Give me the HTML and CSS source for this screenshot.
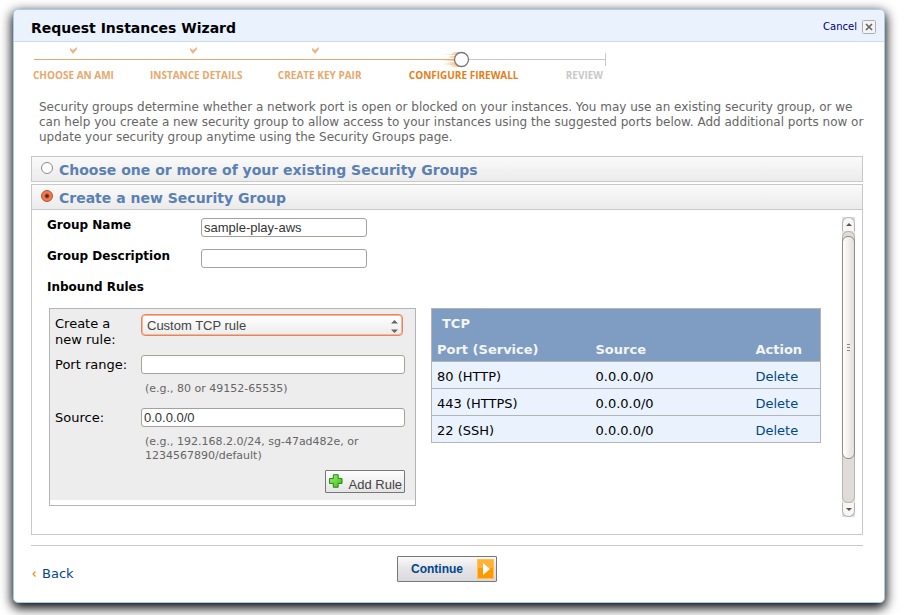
FILE: index.html
```html
<!DOCTYPE html>
<html lang="en">
<head>
<meta charset="utf-8">
<title>Request Instances Wizard</title>
<link rel="stylesheet" href="styles.css">
</head>
<body>
<main class="dialog">
  <header class="titlebar">
    <h1>Request Instances Wizard</h1>
    <button type="button" class="cancel">
      <span>Cancel</span>
      <svg width="14" height="14" viewBox="0 0 14 14" aria-hidden="true">
        <rect x=".5" y=".5" width="13" height="13" rx="1" fill="#f4f4f4" stroke="#b0aeac"/>
        <path d="M4 4l6 6M10 4l-6 6" stroke="#666" stroke-width="1.700"/>
      </svg>
    </button>
  </header>

  <nav class="steps" aria-label="Wizard steps">
    <svg class="track" width="573" height="22" viewBox="0 0 573 22" aria-hidden="true">
      <defs>
        <linearGradient id="trail"><stop offset="0" stop-color="#f4a866" stop-opacity="0"/><stop offset="1" stop-color="#f2a057" stop-opacity=".8"/></linearGradient>
      </defs>
      <path d="M1 12.500h420" stroke="#e6a972"/>
      <path d="M436 12.500h136M572.500 6v13" stroke="#c8c8c8"/>
      <g fill="url(#trail)">
        <path d="M417 5h9v2h-9z"/><path d="M411 7h14v1h-14z"/><path d="M414 9h10v2h-10z"/><path d="M409 12h14v2h-14z"/><path d="M413 15h11v1h-11z"/><path d="M410 16h15v2h-15z"/><path d="M416 18h10v2h-10z"/>
      </g>
      <circle cx="428.500" cy="12.500" r="7" fill="#fff" stroke="#777" stroke-width="1.300"/>
      <g fill="#ecb585">
        <path d="M37 1l3 2 4-3v2l-4 5-3-4z"/>
        <path d="M157 1l3 2 4-3v2l-4 5-3-4z"/>
        <path d="M279 1l3 2 4-3v2l-4 5-3-4z"/>
      </g>
    </svg>
    <ol class="labels">
      <li>CHOOSE AN AMI</li>
      <li>INSTANCE DETAILS</li>
      <li>CREATE KEY PAIR</li>
      <li class="current" aria-current="step">CONFIGURE FIREWALL</li>
      <li class="pending">REVIEW</li>
    </ol>
  </nav>

  <p class="intro">Security groups determine whether a network port is open or blocked on your instances. You may use an existing security group, or we can help you create a new security group to allow access to your instances using the suggested ports below. Add additional ports now or update your security group anytime using the Security Groups page.</p>

  <section class="panel">
    <label class="panel-head"><input type="radio" name="group"><span>Choose one or more of your existing Security Groups</span></label>
  </section>

  <section class="panel">
    <label class="panel-head open"><input type="radio" name="group" checked><span>Create a new Security Group</span></label>
    <div class="panel-body">
      <div class="content">
        <div class="field"><label for="gname">Group Name</label><input type="text" id="gname" value="sample-play-aws"></div>
        <div class="field"><label for="gdesc">Group Description</label><input type="text" id="gdesc"></div>
        <h2>Inbound Rules</h2>
        <div class="rules">
          <form class="rule-form">
            <div class="rule-fields">
              <label for="rule">Create a new rule:</label>
              <div class="select-wrap">
                <select id="rule"><option>Custom TCP rule</option></select>
                <svg class="arrows" width="7" height="13" viewBox="0 0 7 13" aria-hidden="true"><path d="M0 3.500L3.500 0 7 3.500zM0 9.500h7L3.500 13z" fill="#666"/></svg>
              </div>
              <label for="port">Port range:</label>
              <div><input type="text" id="port"><p class="hint">(e.g., 80 or 49152-65535)</p></div>
              <label for="source">Source:</label>
              <div><input type="text" id="source" value="0.0.0.0/0"><p class="hint">(e.g., 192.168.2.0/24, sg-47ad482e, or 1234567890/default)</p></div>
            </div>
            <button type="button" class="add">
              <svg width="14" height="14" viewBox="0 0 14 14" aria-hidden="true">
                <defs><linearGradient id="green" x1="0" y1="0" x2="1" y2="1"><stop offset="0" stop-color="#a5ee7a"/><stop offset="1" stop-color="#3fbe10"/></linearGradient></defs>
                <path d="M4.500.500h5v4h4v5h-4v4h-5v-4h-4v-5h4z" fill="url(#green)" stroke="#158a0d"/>
              </svg>
              <span>Add Rule</span>
            </button>
          </form>
          <table class="ports">
            <thead>
              <tr class="proto"><th colspan="3">TCP</th></tr>
              <tr><th class="c1">Port (Service)</th><th class="c2">Source</th><th>Action</th></tr>
            </thead>
            <tbody>
              <tr><td>80 (HTTP)</td><td>0.0.0.0/0</td><td><a href="#">Delete</a></td></tr>
              <tr><td>443 (HTTPS)</td><td>0.0.0.0/0</td><td><a href="#">Delete</a></td></tr>
              <tr><td>22 (SSH)</td><td>0.0.0.0/0</td><td><a href="#">Delete</a></td></tr>
            </tbody>
          </table>
        </div>
      </div>
      <div class="scrollbar" aria-hidden="true">
        <div class="up"><svg width="6" height="3" viewBox="0 0 6 3"><path d="M0 3l3-3 3 3z" fill="#555"/></svg></div>
        <div class="trough"><div class="thumb"><i></i><i></i><i></i></div></div>
        <div class="down"><svg width="6" height="3" viewBox="0 0 6 3"><path d="M0 0h6L3 3z" fill="#555"/></svg></div>
      </div>
    </div>
  </section>

  <footer class="footer">
    <a href="#" class="back"><svg width="4" height="6" viewBox="0 0 4 6" aria-hidden="true"><path d="M3.500.500L1 3l2.500 2.500" fill="none" stroke="#f08a24" stroke-width="1.200"/></svg><span>Back</span></a>
    <button type="button" class="continue">
      <span>Continue</span>
      <svg width="17" height="20" viewBox="0 0 17 20" aria-hidden="true">
        <rect width="17" height="20" fill="#f90"/><rect width="17" height="9" fill="#ffb236"/>
        <rect x=".5" y=".5" width="16" height="19" fill="none" stroke="#ffc04d"/>
        <path d="M6 4v12l7-6z" fill="#fff"/>
      </svg>
    </button>
  </footer>
</main>
</body>
</html>
```
FILE: styles.css
```css
* { box-sizing: border-box; }
body {
  margin: 0;
  padding: 9px 25px 12px 13px;
  background: #fff;
  color: #000;
  font: 13px/16px "DejaVu Sans", sans-serif;
  overflow: hidden;
}
h1, h2, p, ol { margin: 0; padding: 0; }
a { color: #00468c; text-decoration: none; }
button { font: inherit; cursor: pointer; }

.dialog {
  padding-bottom: 20px;
  background: #fff;
  border: 1px solid #a5cbea;
  border-radius: 5px;
  box-shadow: 0 4px 12px 1px #000;
}
.titlebar {
  display: flex;
  align-items: center;
  justify-content: space-between;
  height: 32px;
  padding: 3px 8px 0 17px;
  background: #eaf2fe;
  border-bottom: 1px solid #c9dcea;
  border-radius: 4px 4px 0 0;
}
h1 { padding-top: 2px; font-size: 14px; line-height: 18px; }
.cancel {
  display: flex;
  align-items: center;
  gap: 5px;
  padding: 0;
  border: 0;
  background: none;
  color: #00007d;
  font-size: 10px;
}

.steps { padding: 5px 19px 0; }
.track { display: block; }
.labels {
  display: grid;
  grid-template-columns: 117fr 128fr 131fr 157fr 37fr;
  width: 570px;
  list-style: none;
  color: #e9a76a;
  font: bold 10px/12px "Open Sans", sans-serif;
  white-space: nowrap;
}
.labels .current { color: #e67e17; }
.labels .pending { color: #c8c8c8; }

.intro {
  padding: 19px 16px 11px 25px;
  color: #666;
  font-size: 12px;
  line-height: 15px;
}

.panel { margin: 0 21px 2px 17px; border: 1px solid #c8c8c8; }
.panel-head {
  display: flex;
  align-items: center;
  height: 24px;
  padding: 0 9px;
  gap: 6px;
  background: linear-gradient(#fafafa, #ebebeb);
  color: #5b80b2;
  font-size: 14px;
  font-weight: bold;
}
.panel-head.open { height: 25px; border-bottom: 1px solid #c8c8c8; }
.panel-head span { padding-top: 2px; }
.panel-head input {
  appearance: none;
  width: 12px;
  height: 12px;
  margin: 0 0 3px;
  border: 1px solid #8c8c8c;
  border-radius: 50%;
  background: #fff;
}
.panel-head input:checked {
  border-color: #b4512c;
  background: radial-gradient(circle, #5a2413 0 1px, #f07c50 3px);
}
.panel-body {
  display: flex;
  justify-content: space-between;
  padding: 7px 7px 17px 15px;
}
.field {
  display: grid;
  grid-template-columns: 154px 166px;
  margin-bottom: 11px;
  font-size: 12px;
  font-weight: bold;
}
input[type="text"] {
  width: 100%;
  height: 19px;
  padding: 0 2px;
  border: 1px solid #a5a19d;
  border-radius: 3px;
  background: #fff;
  color: #333;
  font: 13px/16px "Liberation Sans", sans-serif;
}
.field input { margin-top: 1px; }
h2 { font-size: 12px; line-height: 16px; }

.rules { display: flex; align-items: flex-start; gap: 15px; padding: 13px 0 0 2px; }
.rule-form {
  width: 367px;
  border: 1px solid #b4b4b4;
  padding: 5px 10px 12px 5px;
  background: linear-gradient(#ededed, #ededed) no-repeat 0 0 / 100% calc(100% - 5px) #fff;
}
.rule-fields {
  display: grid;
  grid-template-columns: 86px 1fr;
}
.rule-fields > label { padding-top: 2px; }
.rule-fields > div { margin-bottom: 12px; }
.rule-fields > .select-wrap { position: relative; height: 29px; }
select {
  appearance: none;
  width: 262px;
  height: 22px;
  padding: 2px 5px 0;
  border: 1px solid #e8845c;
  border-radius: 4px;
  box-shadow: inset 0 0 0 1px #f3b79d;
  background: linear-gradient(#fff, #ececec);
  color: #444;
  font: 13px/16px "Liberation Sans", sans-serif;
}
.arrows { position: absolute; right: 7px; top: 6px; }
.hint { padding: 8px 4px 0; color: #666; font-size: 11px; line-height: 14px; }
.add {
  display: flex;
  align-items: flex-start;
  gap: 6px;
  width: 80px;
  height: 23px;
  margin: -5px 0 0 auto;
  padding: 3px 2px 0 3px;
  border: 1px solid #777;
  border-radius: 1px;
  background: linear-gradient(#fdfdfd, #e4e4e4);
  color: #444;
  font: 13px/22px "Liberation Sans", sans-serif;
  white-space: nowrap;
}

.ports { width: 390px; border-collapse: collapse; border: 1px solid #b4b4b4; }
.ports th, .ports td { padding: 2px 5px 0; text-align: left; }
.ports td { height: 27px; padding-top: 4px; }
.ports thead { background: #7f9cc3; color: #f3f6f0; }
.ports th { height: 24px; }
.ports .proto th { height: 29px; padding-left: 10px; }
.ports .c1 { width: 159px; }
.ports .c2 { width: 160px; }
.ports tbody tr { background: #eaf2fe; border-top: 1px solid #b4b4b4; }

.scrollbar { display: flex; flex-direction: column; width: 13px; height: 300px; background: #e4e1de; }
.up, .down {
  display: flex;
  align-items: center;
  justify-content: center;
  height: 14px;
  border: 1px solid #b8b3af;
  background: #f6f6f6;
}
.up { border-bottom: 0; border-radius: 6px 6px 0 0; }
.down { border-top: 0; border-radius: 0 0 6px 6px; }
.trough { flex: 1; padding: 4px 0 43px; border: 1px solid #b8b3af; border-radius: 6px; background: #dedbd8; }
.thumb {
  display: flex;
  flex-direction: column;
  align-items: center;
  justify-content: center;
  gap: 2px;
  height: 100%;
  margin: 0 -1px;
  border: 1px solid #8f8b88;
  border-radius: 6px;
  background: linear-gradient(90deg, #fff, #e2dfdd);
}
.thumb i { width: 3px; height: 1px; background: #888; }

.footer {
  display: grid;
  grid-template-columns: 1fr auto 1fr;
  align-items: center;
  margin: 10px 21px 0 17px;
  padding-top: 10px;
  border-top: 1px solid #c8c8c8;
}
.back { display: flex; align-items: center; gap: 6px; padding: 9px 0 0 1px; }
.continue {
  display: flex;
  align-items: center;
  gap: 14px;
  height: 26px;
  padding: 0 2px 0 13px;
  border: 1px solid #777;
  border-radius: 1px;
  background: linear-gradient(#fafafa, #e6e6e8 45%, #dadade);
  color: #00468c;
  font: bold 12px/16px "Liberation Sans", sans-serif;
}
```
